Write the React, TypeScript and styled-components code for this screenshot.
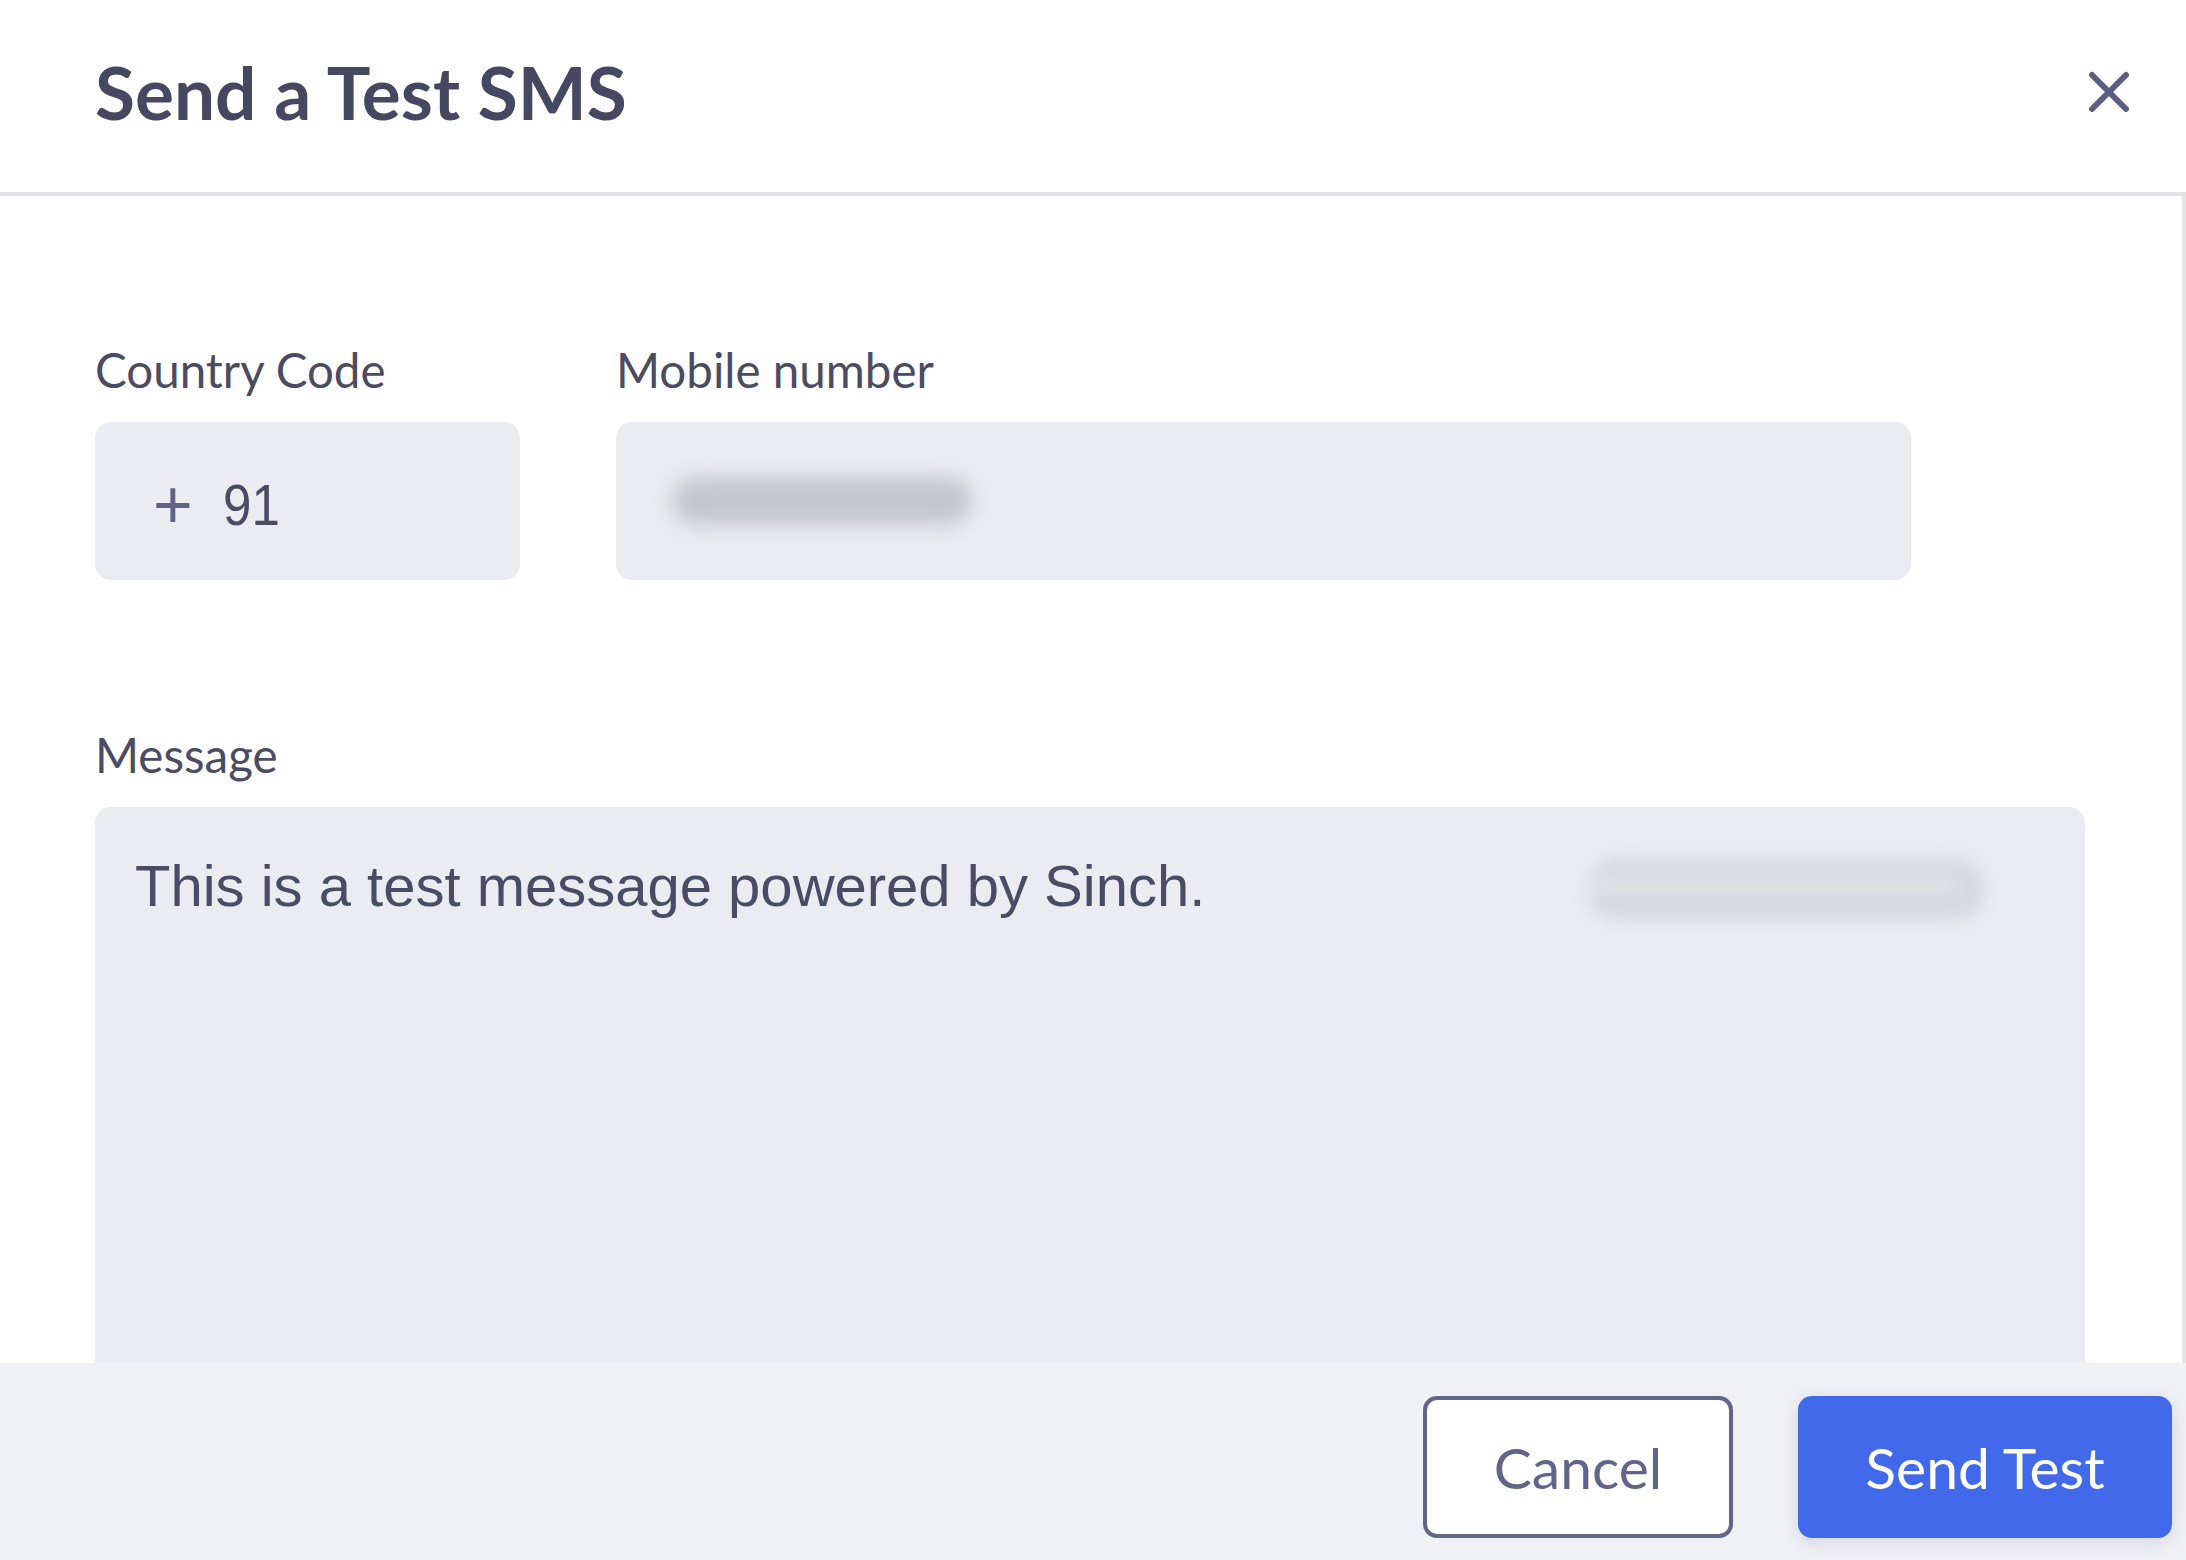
import styled, { createGlobalStyle } from "styled-components";

const GlobalStyle = createGlobalStyle`
  html, body {
    margin: 0;
    padding: 0;
    background: #ffffff;
  }
  body {
    font-family: "Lato", "Noto Sans", sans-serif;
  }
`;

const Modal = styled.div`
  width: 2186px;
  height: 1560px;
  display: flex;
  flex-direction: column;
  background: #ffffff;
  overflow: hidden;
`;

const Header = styled.header`
  height: 196px;
  flex-shrink: 0;
  display: flex;
  align-items: center;
  justify-content: space-between;
  padding: 0 56px 0 95px;
  border-bottom: 4px solid #e2e2e4;
  box-sizing: border-box;
`;

const Title = styled.h1`
  margin: 0 0 9px;
  font-family: "Lato", sans-serif;
  font-weight: 700;
  font-size: 73px;
  color: #454860;
`;

const CloseButton = styled.button`
  width: 42px;
  height: 42px;
  padding: 0;
  border: none;
  background: none;
  cursor: pointer;
  display: flex;
  margin-bottom: 8px;
`;

const Body = styled.main`
  flex: 1;
  min-height: 0;
  overflow: hidden;
  padding: 146px 0 0 95px;
  border-right: 4px solid #e4e4e6;
  display: flex;
  flex-direction: column;
  gap: 147px;
`;

const FieldRow = styled.div`
  display: flex;
  gap: 96px;
`;

const Field = styled.div<{ $width: number }>`
  width: ${(p) => p.$width}px;
  display: flex;
  flex-direction: column;
  gap: 24px;
`;

const Label = styled.label`
  font-family: "Lato", sans-serif;
  font-size: 47.5px;
  line-height: 56px;
  color: #4a4c63;
`;

const Input = styled.div<{ $pad: number }>`
  height: 158px;
  border-radius: 16px;
  background: #ebecf1;
  display: flex;
  align-items: center;
  padding: 6px 0 0 ${(p) => p.$pad}px;
  box-sizing: border-box;
  font-family: "Liberation Sans", Arial, sans-serif;
  font-size: 56px;
  color: #4a4c63;
`;

const Plus = styled.span`
  color: #5f6387;
  font-size: 68px;
  margin-right: 30px;
  font-weight: 300;
`;

const Digits = styled.span`
  display: inline-block;
  font-size: 58px;
  transform: scaleX(0.88);
  transform-origin: left center;
`;

const Blurred = styled.div<{ $w: number; $h: number; $color: string }>`
  width: ${(p) => p.$w}px;
  height: ${(p) => p.$h}px;
  border-radius: ${(p) => p.$h / 2}px;
  background: ${(p) => p.$color};
  filter: blur(10px);
  margin-top: -6px;
`;

const TextArea = styled.div`
  position: relative;
  width: 1990px;
  height: 640px;
  border-radius: 16px 16px 0 0;
  background: #ebecf1;
  padding: 44px 40px;
  box-sizing: border-box;
  font-family: "Liberation Sans", Arial, sans-serif;
  font-size: 58px;
  line-height: 70px;
  color: #4a4c66;
`;

const Redaction = styled.div`
  position: absolute;
  left: 1491px;
  top: 50px;
  width: 400px;
  height: 64px;
  border-radius: 32px;
  background: #d8d9e0;
  filter: blur(8px);

  &::after {
    content: "";
    position: absolute;
    left: 0;
    right: 30px;
    top: 24px;
    height: 8px;
    background: #e8e9ee;
  }
`;

const Footer = styled.footer`
  height: 197px;
  flex-shrink: 0;
  background: #f0f1f5;
  display: flex;
  align-items: center;
  justify-content: flex-end;
  gap: 65px;
  padding-right: 14px;
`;

const Button = styled.button<{ $primary?: boolean }>`
  height: 142px;
  width: ${(p) => (p.$primary ? 374 : 310)}px;
  border-radius: 14px;
  box-sizing: border-box;
  font-family: "Lato", sans-serif;
  font-size: 57px;
  cursor: pointer;
  border: ${(p) => (p.$primary ? "none" : "4px solid #61658a")};
  background: ${(p) => (p.$primary ? "#4169e9" : "#ffffff")};
  color: ${(p) => (p.$primary ? "#ffffff" : "#61658a")};
  box-shadow: ${(p) => (p.$primary ? "0 4px 18px rgba(40, 50, 90, 0.14)" : "none")};
  margin-top: 10px;
`;

export default function App() {
  return (
    <>
      <GlobalStyle />
      <Modal>
        <Header>
          <Title>Send a Test SMS</Title>
          <CloseButton aria-label="Close">
            <svg width="42" height="42" viewBox="0 0 42 42">
              <path
                d="M4 4 L38 38 M38 4 L4 38"
                stroke="#5a5e85"
                strokeWidth="6"
                strokeLinecap="round"
                fill="none"
              />
            </svg>
          </CloseButton>
        </Header>
        <Body>
          <FieldRow>
            <Field $width={425}>
              <Label>Country Code</Label>
              <Input $pad={58}>
                <Plus>+</Plus>
                <Digits>91</Digits>
              </Input>
            </Field>
            <Field $width={1295}>
              <Label>Mobile number</Label>
              <Input $pad={56}>
                <Blurred $w={300} $h={48} $color="#c4c5d0" />
              </Input>
            </Field>
          </FieldRow>
          <Field $width={1990}>
            <Label>Message</Label>
            <TextArea>
              This is a test message powered by Sinch.
              <Redaction />
            </TextArea>
          </Field>
        </Body>
        <Footer>
          <Button>Cancel</Button>
          <Button $primary>Send Test</Button>
        </Footer>
      </Modal>
    </>
  );
}
